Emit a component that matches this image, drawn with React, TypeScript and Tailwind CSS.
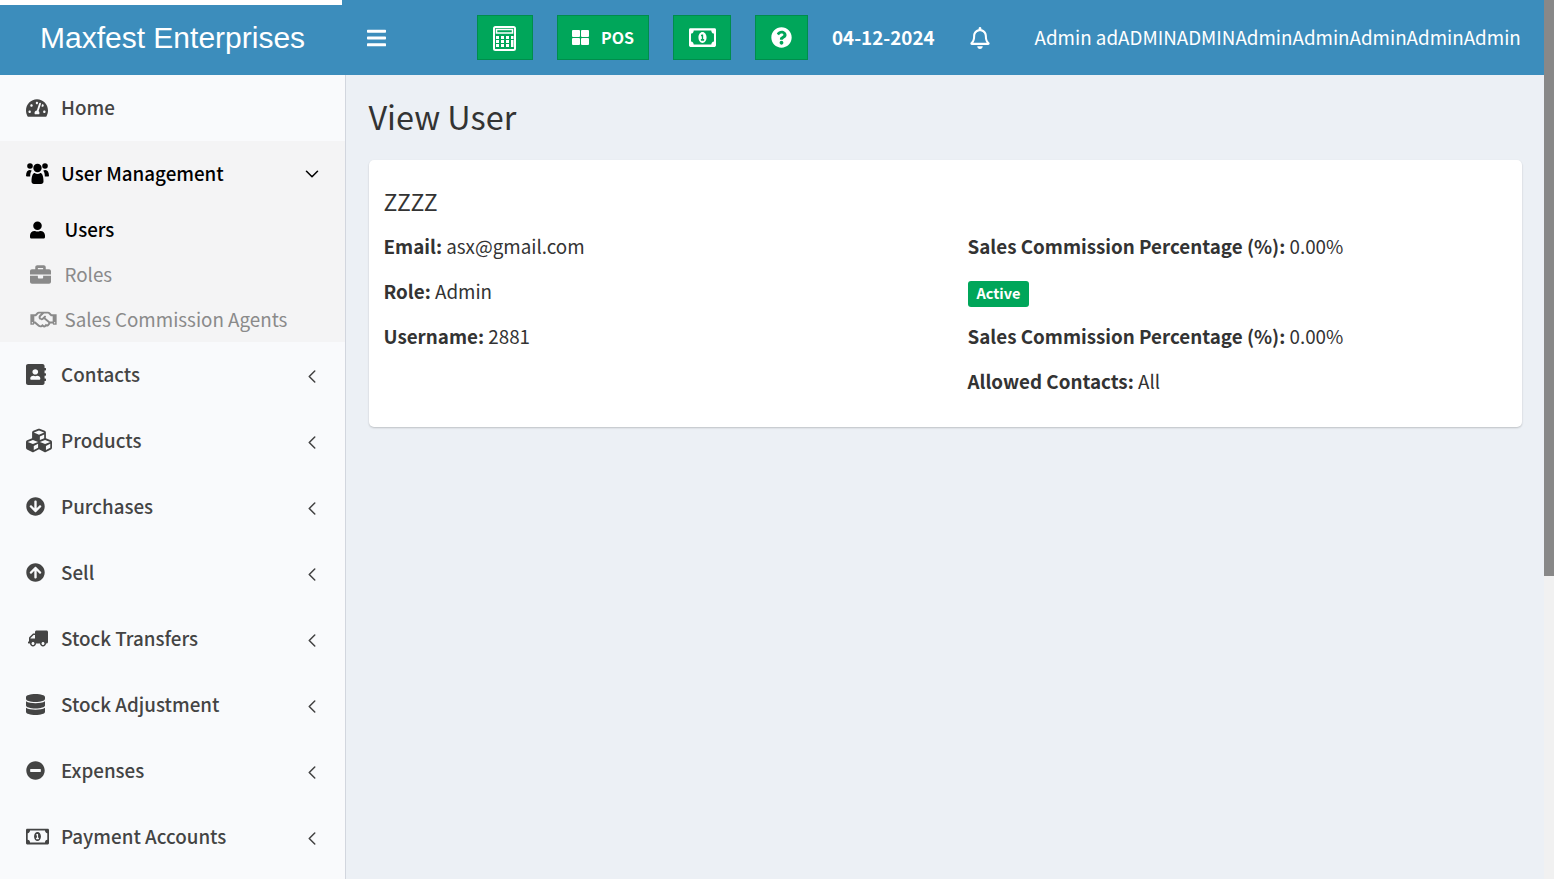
import { ChevronDown, ChevronLeft } from 'lucide-react';
import {
  FaAddressBook,
  FaArrowCircleDown,
  FaArrowCircleUp,
  FaBars,
  FaBriefcase,
  FaCubes,
  FaDatabase,
  FaMinusCircle,
  FaQuestionCircle,
  FaRegBell,
  FaRegHandshake,
  FaRegMoneyBillAlt,
  FaTachometerAlt,
  FaTruck,
  FaUser,
} from 'react-icons/fa';

const sans = 'font-["Noto_Sans_CJK_SC",sans-serif]';

const menuBelow = [
  { label: 'Contacts', icon: <FaAddressBook preserveAspectRatio="none" className="h-[21px] w-[20px]" /> },
  { label: 'Products', icon: <FaCubes preserveAspectRatio="none" className="-my-[3px] h-[27px] w-[26px]" /> },
  { label: 'Purchases', icon: <FaArrowCircleDown className="h-[19px] w-[19px]" /> },
  { label: 'Sell', icon: <FaArrowCircleUp className="h-[19px] w-[19px]" /> },
  { label: 'Stock Transfers', icon: <FaTruck className="ml-[2px] h-[17px] w-[20px] -scale-x-100" /> },
  { label: 'Stock Adjustment', icon: <FaDatabase preserveAspectRatio="none" className="h-[21px] w-[19px]" /> },
  { label: 'Expenses', icon: <FaMinusCircle className="h-[19px] w-[19px]" /> },
  { label: 'Payment Accounts', icon: <FaRegMoneyBillAlt preserveAspectRatio="none" className="-my-[3px] h-[21px] w-[23px]" /> },
];

function HeaderButton({ className, children }: { className: string; children: React.ReactNode }) {
  return (
    <button className={`flex h-[45px] items-center justify-center gap-[12px] border border-[#008d4c] bg-[#00a65a] text-white ${className}`}>
      {children}
    </button>
  );
}

function Field({ label, value }: { label: string; value: string }) {
  return (
    <p className="h-[45px] text-[18.8px] leading-[28px] text-[#333]">
      <strong className="font-bold">{label}</strong> {value}
    </p>
  );
}

function Calculator() {
  return (
    <svg className="mr-[2px] mt-[1px]" width="23" height="25" viewBox="0 0 23 25" fill="none">
      <rect x="1" y="1" width="21" height="23" rx="1.5" stroke="white" strokeWidth="2" />
      <rect x="3.5" y="3.5" width="16" height="3.5" stroke="white" strokeWidth="1.5" />
      <g fill="white">
        {[3, 8, 13].map((x) => [10, 14, 18].map((y) => <rect key={`${x}-${y}`} x={x} y={y} width="3" height="3" />))}
        <rect x="18" y="10" width="2.5" height="3" />
        <rect x="18" y="14" width="2.5" height="7" />
      </g>
    </svg>
  );
}

function ThLarge() {
  return (
    <svg width="17" height="15" viewBox="0 0 17 15" fill="white">
      <rect x="0" y="0" width="8" height="7" rx="1" />
      <rect x="9" y="0" width="8" height="7" rx="1" />
      <rect x="0" y="8" width="8" height="7" rx="1" />
      <rect x="9" y="8" width="8" height="7" rx="1" />
    </svg>
  );
}

function Users() {
  return (
    <svg width="23" height="21" viewBox="0 0 23 21" fill="black">
      <circle cx="4" cy="3" r="2.8" />
      <circle cx="19" cy="3" r="2.8" />
      <circle cx="11.5" cy="5" r="4.2" />
      <path d="M0 13c0-4 1.5-6 3.5-6 1 0 1.7.3 2.3.8C4.6 9 4.2 11 4.2 13.5H1.2C.5 13.5 0 13.3 0 13z" />
      <path d="M23 13c0-4-1.500-6-3.500-6-1 0-1.700.3-2.300.8 1.200 1.200 1.600 3.200 1.600 5.700h3C22.500 13.500 23 13.300 23 13z" />
      <path d="M5.500 18.500c0-6 1.600-8.500 3.200-8.500.8.7 1.800 1 2.800 1s2-.3 2.800-1c1.600 0 3.200 2.500 3.200 8.500 0 1.600-1 2.500-2.500 2.500h-7C6.500 21 5.500 20.100 5.500 18.500z" />
    </svg>
  );
}

export default function App() {
  return (
    <div className={`${sans} relative h-[879px] overflow-hidden bg-[#ecf0f5]`}>
      {/* scrollbar */}
      <div className="absolute right-0 top-0 z-10 h-full w-[10px] bg-[#f1f1f1]">
        <div className="h-[576px] bg-[#888]" />
      </div>
      <header className="relative flex h-[75px] items-center bg-[#3c8dbc] text-white">
        <div className="absolute left-0 top-0 h-[5px] w-[342px] bg-white" />
        <div className="w-[345px] shrink-0 pl-[40px] font-['Liberation_Sans',sans-serif] text-[30px] leading-[75px]">
          Maxfest Enterprises
        </div>
        <FaBars className="ml-[22px] h-[22px] w-[19px] shrink-0" />
        <div className="ml-[91px] flex shrink-0 items-center gap-[24px]">
          <HeaderButton className="w-[56px]">
            <Calculator />
          </HeaderButton>
          <HeaderButton className="w-[92px]">
            <ThLarge />
            <span className="pb-[2px] text-[16px] font-bold">POS</span>
          </HeaderButton>
          <HeaderButton className="w-[58px]">
            <FaRegMoneyBillAlt preserveAspectRatio="none" className="h-[25px] w-[27px]" />
          </HeaderButton>
          <HeaderButton className="w-[53px]">
            <FaQuestionCircle className="h-[21px] w-[21px]" />
          </HeaderButton>
        </div>
        <span className="ml-[24px] whitespace-nowrap text-[18.8px] font-bold">04-12-2024</span>
        <FaRegBell className="ml-[35px] h-[22px] w-[20px] shrink-0" />
        <span className="ml-[45px] whitespace-nowrap text-[18.8px]">Admin adADMINADMINAdminAdminAdminAdminAdmin</span>
      </header>
      <div className="flex">
        <aside className="h-[804px] w-[346px] shrink-0 border-r border-[#d2d6de] bg-[#f9fafc] text-[18.8px]">
          <div className="flex h-[66px] items-center pb-[1px] pl-[26px] font-medium text-[#444]">
            <span className="flex w-[35px]"><FaTachometerAlt preserveAspectRatio="none" className="h-[20px] w-[22px]" /></span>
            Home
          </div>
          <div className="h-[201px] bg-[#f4f4f5]">
            <div className="flex h-[66px] items-center pb-[1px] pl-[26px] pr-[22px] font-medium text-black">
              <span className="flex w-[35px]"><Users /></span>
              <span className="flex-1">User Management</span>
              <ChevronDown size={22} strokeWidth={1.7} />
            </div>
            <div className="flex h-[45px] items-center pl-[30px] font-medium text-black">
              <span className="flex w-[34.5px]"><FaUser className="h-[18px] w-[15px]" /></span>
              Users
            </div>
            <div className="flex h-[45px] items-center pl-[30px] text-[#8a8a8a]">
              <span className="flex w-[34.5px]"><FaBriefcase className="h-[21px] w-[21px]" /></span>
              Roles
            </div>
            <div className="flex h-[45px] items-center pl-[30px] text-[#8a8a8a]">
              <span className="flex w-[34.5px]"><FaRegHandshake className="h-[21px] w-[27px]" /></span>
              Sales Commission Agents
            </div>
          </div>
          {menuBelow.map((item) => (
            <div key={item.label} className="flex h-[66px] items-center pb-[1px] pl-[26px] pr-[22px] font-medium text-[#444]">
              <span className="flex w-[35px]">{item.icon}</span>
              <span className="flex-1">{item.label}</span>
              <ChevronLeft className="translate-y-[1.5px]" size={22} strokeWidth={1.7} />
            </div>
          ))}
        </aside>
        <main className="flex-1 pl-[23px] pr-[32px]">
          <h1 className="-ml-[0.5px] h-[85px] pt-[18px] text-[32.4px] leading-[46px] text-[#333]">View User</h1>
          <section className="h-[267px] rounded-[5px] bg-white pl-[14.5px] pr-[15px] pt-[24px] shadow-[0_1px_2px_rgba(0,0,0,0.2)]">
            <h3 className="h-[48px] text-[23px] leading-[34px] text-[#333]">ZZZZ</h3>
            <div className="grid grid-cols-[584px_1fr]">
              <div>
                <Field label="Email:" value="asx@gmail.com" />
                <Field label="Role:" value="Admin" />
                <Field label="Username:" value="2881" />
              </div>
              <div>
                <Field label="Sales Commission Percentage (%):" value="0.00%" />
                <div className="h-[45px] pt-[3px]">
                  <span className="inline-block h-[26px] rounded-[3px] bg-[#00a65a] px-[9px] text-[14.5px] font-bold leading-[24px] text-white">Active</span>
                </div>
                <Field label="Sales Commission Percentage (%):" value="0.00%" />
                <Field label="Allowed Contacts:" value="All" />
              </div>
            </div>
          </section>
        </main>
      </div>
    </div>
  );
}
